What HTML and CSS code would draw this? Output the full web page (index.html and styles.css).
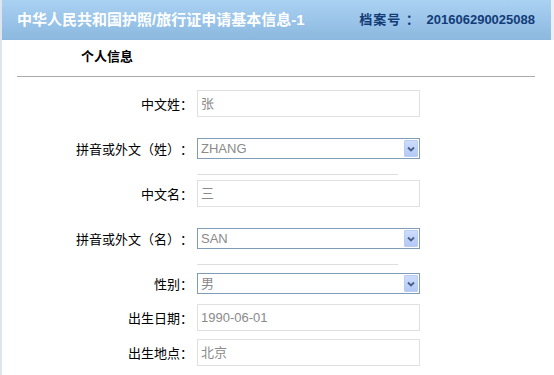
FILE: index.html
```html
<!DOCTYPE html>
<html lang="zh">
<head>
  <meta charset="UTF-8">
  <meta name="viewport" content="width=device-width, initial-scale=1.0">
  <title>护照/旅行证申请基本信息</title>
  <link rel="stylesheet" href="styles.css">
</head>
<body>
  <div class="page">
    <div class="title-bar">
      <span class="title">中华人民共和国护照/旅行证申请基本信息-1</span>
      <span class="file-no">档案号 ： <span class="num">201606290025088</span></span>
    </div>

    <div class="section-title">个人信息</div>

    <div class="form">
      <div class="row row-input">
        <label>中文姓：</label>
        <div class="field">张</div>
      </div>
      <div class="row row-select">
        <label>拼音或外文（姓）：</label>
        <div class="select">
          <span class="value">ZHANG</span>
          <span class="select-btn">
            <svg width="8" height="6" viewBox="0 0 8 6"><path d="M1 1.5 L4 4.5 L7 1.5" fill="none" stroke="#4a5f86" stroke-width="1.8"/></svg>
          </span>
        </div>
      </div>
      <div class="sub-line first"></div>

      <div class="row row-input">
        <label>中文名：</label>
        <div class="field">三</div>
      </div>
      <div class="row row-select">
        <label>拼音或外文（名）：</label>
        <div class="select">
          <span class="value">SAN</span>
          <span class="select-btn">
            <svg width="8" height="6" viewBox="0 0 8 6"><path d="M1 1.5 L4 4.5 L7 1.5" fill="none" stroke="#4a5f86" stroke-width="1.8"/></svg>
          </span>
        </div>
      </div>
      <div class="sub-line"></div>

      <div class="row row-gender">
        <label>性别：</label>
        <div class="select">
          <span class="value">男</span>
          <span class="select-btn">
            <svg width="8" height="6" viewBox="0 0 8 6"><path d="M1 1.5 L4 4.5 L7 1.5" fill="none" stroke="#4a5f86" stroke-width="1.8"/></svg>
          </span>
        </div>
      </div>
      <div class="row row-date">
        <label>出生日期：</label>
        <div class="field">1990-06-01</div>
      </div>
      <div class="row">
        <label>出生地点：</label>
        <div class="field">北京</div>
      </div>
    </div>
  </div>
</body>
</html>
```

FILE: styles.css
```css
body {
  margin: 0;
  font-family: "Liberation Sans", "Noto Sans CJK SC", sans-serif;
  font-size: 13px;
  color: #000;
  background-color: #fff;
  text-spacing-trim: space-all;
}
.page {
  border-left: 2px solid #dfe5ec;
  min-height: 375px;
}
.title-bar {
  height: 40px;
  line-height: 40px;
  display: flex;
  justify-content: space-between;
  padding: 0 16px 0 15px;
  background: linear-gradient(#a9d1f2, #8cb8df);
  border-right: 3px solid #edf0f3;
}
.title {
  color: #fff;
  font-weight: bold;
  font-size: 15px;
}
.file-no {
  color: #123c78;
  font-weight: bold;
  font-size: 13px;
  letter-spacing: 1px;
}
.file-no .num {
  letter-spacing: 0;
  margin-left: 2px;
}
.section-title {
  height: 36px;
  line-height: 34px;
  font-weight: bold;
  font-size: 13px;
  border-bottom: 1px solid #aaa;
  margin-right: 19px;
  margin-left: 15px;
  padding-left: 64px;
}
.form {
  padding-top: 13px;
}
.row {
  display: flex;
  align-items: center;
}
.row label {
  width: 191px;
  text-align: right;
  margin-right: 4px;
  font-family: "Noto Sans CJK SC", sans-serif;
}
.field {
  width: 218px;
  height: 25px;
  line-height: 25px;
  padding-left: 3px;
  border: 1px solid #e0e0e0;
  color: #8a8a8a;
}
.select {
  width: 218px;
  height: 19px;
  border: 1px solid #7f9db9;
  display: flex;
  align-items: center;
  justify-content: space-between;
  color: #8a8a8a;
  padding-left: 3px;
}
.select .value {
  line-height: 19px;
}
.select-btn {
  width: 14px;
  height: 17px;
  margin-right: 1px;
  box-sizing: border-box;
  border: 1px solid #b9cdf3;
  border-radius: 1px;
  background: linear-gradient(#cddcfc, #b3c9f6);
  display: flex;
  align-items: center;
  justify-content: center;
}
.row-input {
  margin-bottom: 21px;
}
.sub-line {
  width: 201px;
  margin: 15px 0 8px 195px;
  border-top: 1px solid #dedede;
}
.sub-line.first {
  margin-bottom: 5px;
}
.row-gender {
  margin-bottom: 10px;
}
.row-date {
  margin-bottom: 8px;
}
```
